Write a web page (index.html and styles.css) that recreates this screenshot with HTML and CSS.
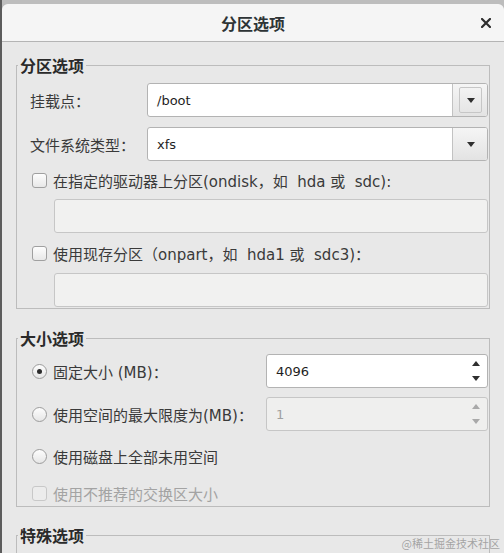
FILE: index.html
```html
<!DOCTYPE html>
<html lang="zh-CN">
<head>
<meta charset="utf-8">
<title>分区选项</title>
<link rel="stylesheet" href="styles.css">
</head>
<body>
<div class="dialog">
  <div class="titlebar">
    <span class="title">分区选项</span>
    <button class="close" aria-label="关闭">
      <svg width="10" height="10" viewBox="0 0 10 10"><path d="M1 1 L9 9 M9 1 L1 9" stroke="#2e2e2e" stroke-width="2.2" stroke-linecap="square" fill="none"/></svg>
    </button>
  </div>
  <div class="content">
    <fieldset class="frame">
      <legend>分区选项</legend>
      <div class="frame-body part-body">
        <div class="form-row">
          <label class="field-label">挂载点<span class="colon">：</span></label>
          <div class="combo">
            <span class="combo-value">/boot</span>
            <span class="combo-btn focused"><span class="arrow-box"><span class="arrow-down"></span></span></span>
          </div>
        </div>
        <div class="form-row second">
          <label class="field-label">文件系统类型<span class="colon">：</span></label>
          <div class="combo">
            <span class="combo-value">xfs</span>
            <span class="combo-btn"><span class="arrow-box"><span class="arrow-down"></span></span></span>
          </div>
        </div>
        <div class="check-row first-check">
          <span class="checkbox"></span>
          <span class="opt-label">在指定的驱动器上分区(ondisk，如 &nbsp;hda 或 &nbsp;sdc):</span>
        </div>
        <div class="entry first-entry"></div>
        <div class="check-row second-check">
          <span class="checkbox"></span>
          <span class="opt-label">使用现存分区（onpart，如 &nbsp;hda1 或 &nbsp;sdc3)<span class="colon">：</span></span>
        </div>
        <div class="entry second-entry"></div>
      </div>
    </fieldset>

    <fieldset class="frame size-frame">
      <legend>大小选项</legend>
      <div class="frame-body size-body">
        <div class="radio-row spin-row">
          <div class="radio-group">
            <span class="radio checked"></span>
            <span class="opt-label">固定大小 (MB)<span class="colon">：</span></span>
          </div>
          <div class="spin">
            <span class="spin-value">4096</span>
            <span class="spin-btns"><span class="arrow-up"></span><span class="arrow-down"></span></span>
          </div>
        </div>
        <div class="radio-row spin-row second">
          <div class="radio-group">
            <span class="radio"></span>
            <span class="opt-label">使用空间的最大限度为(MB)<span class="colon">：</span></span>
          </div>
          <div class="spin disabled">
            <span class="spin-value">1</span>
            <span class="spin-btns"><span class="arrow-up"></span><span class="arrow-down"></span></span>
          </div>
        </div>
        <div class="radio-row plain-row third">
          <span class="radio"></span>
          <span class="opt-label">使用磁盘上全部未用空间</span>
        </div>
        <div class="radio-row plain-row fourth disabled-row">
          <span class="checkbox disabled"></span>
          <span class="opt-label">使用不推荐的交换区大小</span>
        </div>
      </div>
    </fieldset>

    <fieldset class="frame special-frame">
      <legend>特殊选项</legend>
      <div class="frame-body special-body"></div>
    </fieldset>
  </div>
  <div class="watermark">@稀土掘金技术社区</div>
</div>
</body>
</html>
```

FILE: styles.css
```css
* { box-sizing: border-box; }

html, body {
  margin: 0;
  height: 100%;
}

body {
  background: linear-gradient(to right, #5c5c5c 0, #5c5c5c 2px, #bdbdbd 2px);
  overflow: hidden;
  font-family: "DejaVu Sans", "Noto Sans CJK SC", sans-serif;
  color: #3a3a3a;
}

.dialog {
  position: relative;
  margin: 4px 0 0 2px;
  height: calc(100% - 4px);
  background: #e8e8e8;
  border-radius: 6px 6px 0 0;
  overflow: hidden;
  display: flex;
  flex-direction: column;
}

.titlebar {
  flex: none;
  height: 38px;
  background: #f5f5f5;
  border-bottom: 1px solid #b4b4b4;
  border-radius: 6px 6px 0 0;
  display: grid;
  grid-template-columns: 1fr auto 1fr;
  align-items: center;
}

.title {
  grid-column: 2;
  font-family: "Noto Sans CJK SC", sans-serif;
  font-size: 16px;
  font-weight: bold;
  color: #2e3436;
  line-height: 20px;
}

.close {
  grid-column: 3;
  justify-self: end;
  margin-right: 13px;
  width: 10px;
  height: 10px;
  padding: 0;
  border: 0;
  background: none;
  display: flex;
}

.content {
  padding: 13px 14px 0 14px;
  display: flex;
  flex-direction: column;
}

.frame {
  margin: 0;
  padding: 0;
  border: 1px solid #bcbcbc;
  min-width: 0;
}

.frame legend {
  margin-left: 1px;
  padding: 0 2px;
  font-family: "Noto Sans CJK SC", sans-serif;
  font-size: 16px;
  font-weight: bold;
  line-height: 20px;
  color: #2a2a2a;
}

.size-frame { margin-top: 19px; }
.special-frame { margin-top: 18px; }

.frame-body {
  display: flex;
  flex-direction: column;
  padding: 8px 1px 1px 13px;
}

.size-body { padding: 6px 1px 2px 13px; }
.special-body { height: 40px; }

.colon {
  font-family: "Noto Sans CJK TC", "Noto Sans CJK SC", sans-serif;
}

.form-row {
  display: flex;
  align-items: center;
  height: 34px;
}

.form-row.second { margin-top: 10px; }

.field-label {
  width: 117px;
  flex: none;
  font-size: 15px;
}

.combo {
  flex: 1;
  height: 34px;
  display: flex;
  background: #fff;
  border: 1px solid #b3b3b3;
  border-radius: 3px;
  overflow: hidden;
}

.combo-value {
  flex: 1;
  display: flex;
  align-items: center;
  padding-left: 9px;
  font-size: 13px;
  color: #1e1e1e;
}

.combo-btn {
  width: 35px;
  flex: none;
  display: flex;
  padding: 3px 5px 3px 6px;
  border-left: 1px solid #c2c2c2;
  background: linear-gradient(#f5f5f5, #e3e3e3);
}

.arrow-box {
  flex: 1;
  display: flex;
  align-items: center;
  justify-content: center;
  border: 1px solid transparent;
  border-radius: 2px;
}

.combo-btn.focused .arrow-box { border-color: #c6c6c6; }

.arrow-down {
  width: 0;
  height: 0;
  border-left: 4px solid transparent;
  border-right: 4px solid transparent;
  border-top: 5px solid #2f2f2f;
}

.arrow-up {
  width: 0;
  height: 0;
  border-left: 4px solid transparent;
  border-right: 4px solid transparent;
  border-bottom: 5px solid #2f2f2f;
}

.check-row {
  display: flex;
  align-items: center;
  height: 24px;
  padding-left: 2px;
  gap: 6px;
}

.first-check { margin-top: 7px; }
.second-check { margin-top: 8px; }

.opt-label {
  font-size: 15px;
  white-space: nowrap;
}

.checkbox {
  width: 15px;
  height: 15px;
  flex: none;
  border: 1px solid #a0a0a0;
  border-radius: 3px;
  background: linear-gradient(#fdfdfd, #e8e8e8);
}

.checkbox.disabled {
  border-color: #c8c8c8;
  background: #ececec;
}

.entry {
  height: 34px;
  margin-left: 24px;
  background: #f1f1f0;
  border: 1px solid #c6c6c6;
  border-radius: 3px;
}

.first-entry { margin-top: 7px; }
.second-entry { margin-top: 8px; }

.radio-row {
  display: flex;
  align-items: center;
  padding-left: 2px;
  gap: 6px;
}

.spin-row { height: 34px; gap: 0; }
.spin-row.second { margin-top: 9px; }
.plain-row { height: 22px; }
.plain-row.third { margin-top: 14px; }
.plain-row.fourth { margin-top: 15px; }

.disabled-row .opt-label { color: #a3a3a3; }

.radio-group {
  width: 234px;
  flex: none;
  display: flex;
  align-items: center;
  gap: 6px;
}

.radio {
  width: 15px;
  height: 15px;
  flex: none;
  border: 1px solid #9c9c9c;
  border-radius: 50%;
  background: linear-gradient(#fdfdfd, #e6e6e6);
  display: flex;
  align-items: center;
  justify-content: center;
}

.radio.checked::after {
  content: "";
  width: 5px;
  height: 5px;
  border-radius: 50%;
  background: #2c2c2c;
}

.spin {
  flex: 1;
  height: 34px;
  display: flex;
  background: #fff;
  border: 1px solid #b3b3b3;
  border-radius: 3px;
}

.spin-value {
  flex: 1;
  display: flex;
  align-items: center;
  padding-left: 9px;
  font-size: 13px;
  color: #1e1e1e;
}

.spin-btns {
  width: 17px;
  flex: none;
  margin-right: 3px;
  display: flex;
  flex-direction: column;
  align-items: center;
  justify-content: space-between;
  padding: 6px 0 6px;
}

.spin.disabled {
  background: #efefee;
  border-color: #c6c6c6;
}

.spin.disabled .spin-value { color: #a0a0a0; }
.spin.disabled .arrow-up { border-bottom-color: #a9a9a9; }
.spin.disabled .arrow-down { border-top-color: #a9a9a9; }

.watermark {
  position: absolute;
  right: 4px;
  bottom: 4px;
  font-family: "Noto Sans CJK SC", sans-serif;
  font-size: 11px;
  line-height: 12px;
  color: rgba(140, 140, 140, 0.75);
}
```
